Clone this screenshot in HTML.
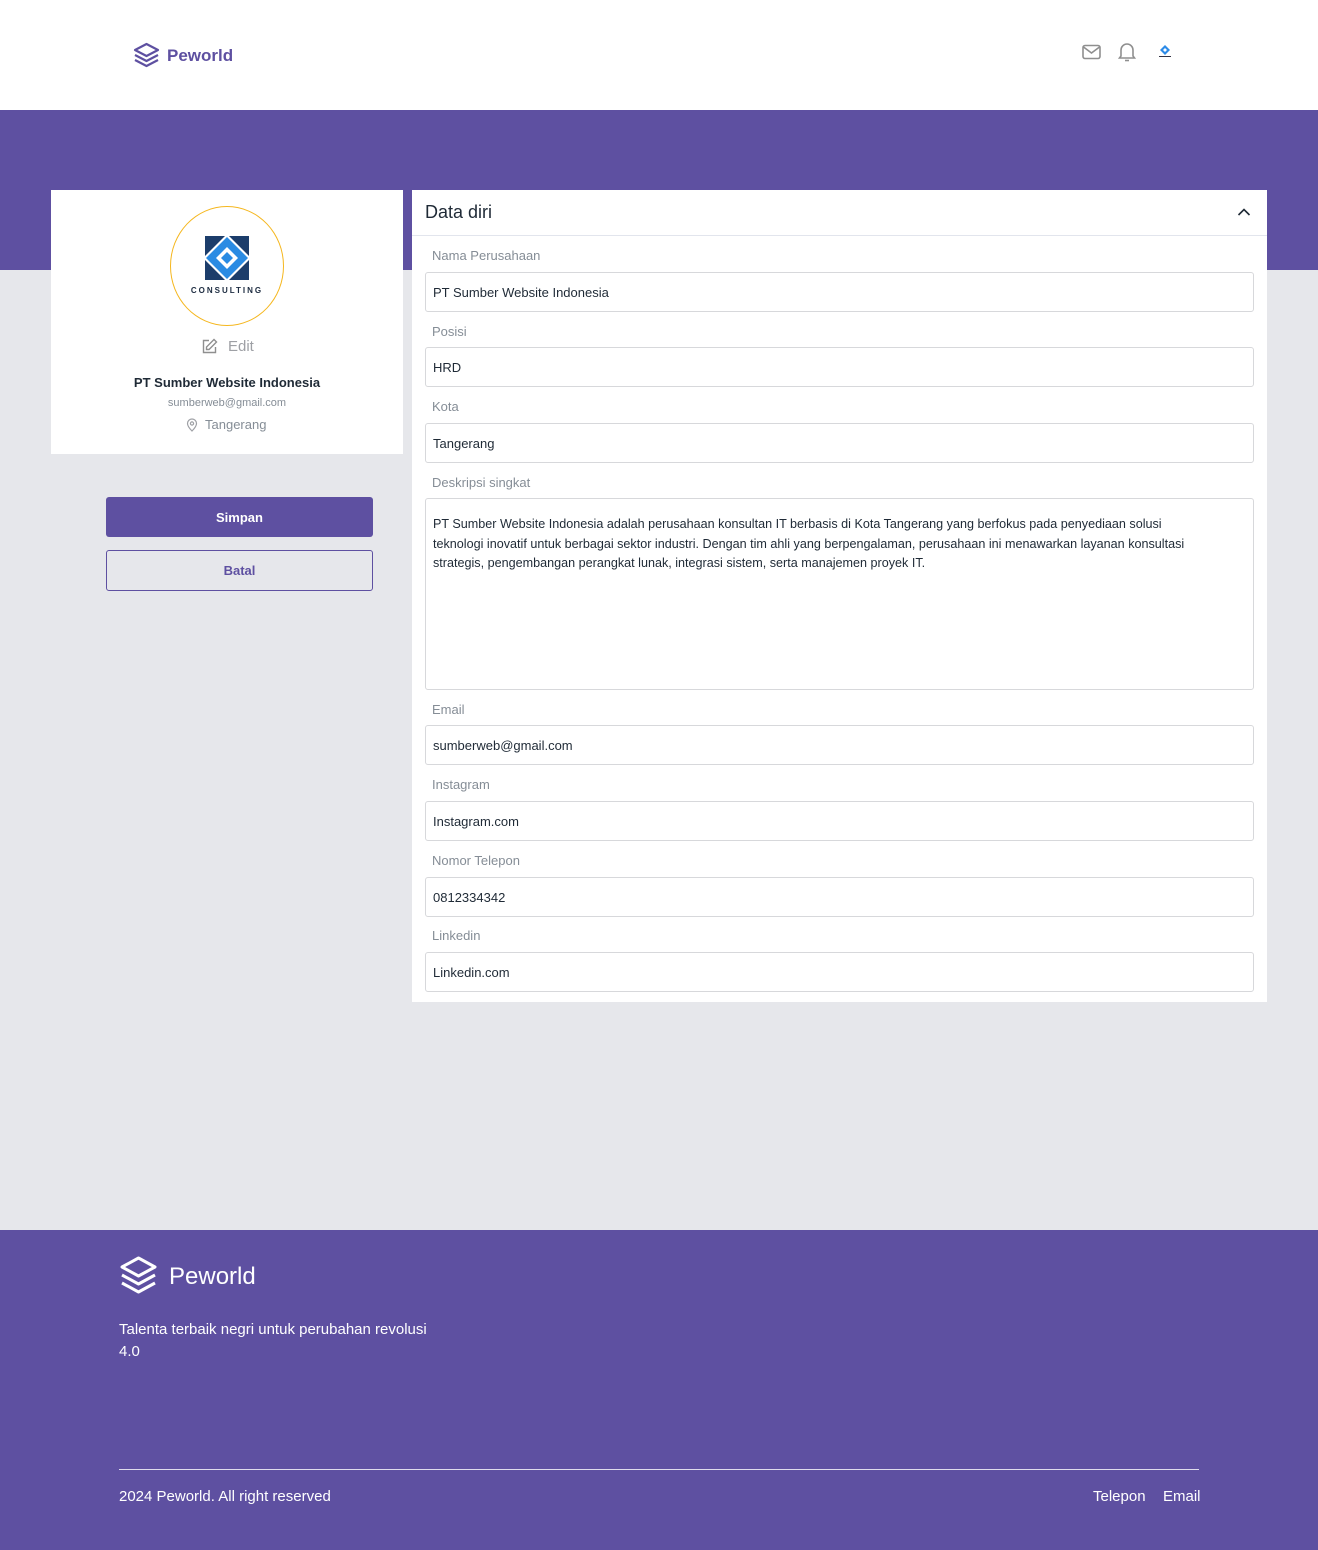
<!DOCTYPE html>
<html><head><meta charset="utf-8"><style>
*{box-sizing:border-box;margin:0;padding:0}
body{width:1318px;height:1550px;position:relative;font-family:"Liberation Sans",sans-serif;background:#E6E7EB;overflow:hidden}
.abs{position:absolute}
.hdr{left:0;top:0;width:1318px;height:110px;background:#fff}
.band{left:0;top:110px;width:1318px;height:160px;background:#5E50A1}
.card{background:#fff}
.lbl{left:432px;font-size:13px;color:#858D96;line-height:16px}
.inp{left:425px;width:829px;height:40px;border:1px solid #D7D8DB;border-radius:3px;font-size:13px;color:#1F2A36;padding:0 7px;line-height:40px}
.foot{left:0;top:1230px;width:1318px;height:320px;background:#5E50A1;color:#fff}
</style></head><body>
<div class="abs hdr"></div>
<svg class="abs" style="left:133px;top:42px" width="27" height="26" viewBox="0 0 27 26" fill="none" stroke="#5E50A1" stroke-width="2.2" stroke-linejoin="round"><path d="M13.5 2L25 8 13.5 14 2 8z"/><path d="M2 13l11.5 6L25 13"/><path d="M2 18l11.5 6L25 18"/></svg>
<div class="abs" style="left:167px;top:46px;font-size:17px;font-weight:bold;color:#5E50A1">Peworld</div>
<svg class="abs" style="left:1082px;top:44px" width="19" height="16" viewBox="0 0 19 16" fill="none" stroke="#8F8F8F" stroke-width="1.6"><rect x="1" y="1.5" width="17" height="13" rx="2"/><path d="M1.5 3l8 6 8-6"/></svg>
<svg class="abs" style="left:1118px;top:42px" width="18" height="20" viewBox="0 0 18 20" fill="none" stroke="#8F8F8F" stroke-width="1.6"><path d="M3 14V8a6 6 0 0112 0v6l1.5 2h-15z"/><path d="M7 18.5h4"/></svg>
<svg class="abs" style="left:1158px;top:44px" width="14" height="14" viewBox="0 0 14 14"><path d="M7 1L12 6 7 11 2 6z" fill="#2D8BE8"/><path d="M7 4L9 6 7 8 5 6z" fill="#fff"/><rect x="1" y="12" width="12" height="1" fill="#334"/></svg>
<div class="abs band"></div>

<div class="abs card" style="left:51px;top:190px;width:352px;height:264px"></div>
<div class="abs" style="left:170px;top:206px;width:114px;height:120px;border:1px solid #F5B71F;border-radius:50%;background:#fff"></div>
<svg class="abs" style="left:203px;top:234px" width="48" height="48" viewBox="0 0 48 48"><rect x="2" y="2" width="44" height="44" fill="#1C3D6B"/><path d="M24 0L48 24 24 48 0 24z" fill="#fff"/><path d="M24 3L45 24 24 45 3 24z" fill="#2A8BE3"/><path d="M24 13L35 24 24 35 13 24z" fill="#fff"/><path d="M24 18L30 24 24 30 18 24z" fill="#2A8BE3"/></svg>
<div class="abs" style="left:170px;top:286px;width:114px;text-align:center;font-size:8px;letter-spacing:2px;font-weight:bold;color:#1C2B40">CONSULTING</div>
<svg class="abs" style="left:201px;top:338px" width="17" height="17" viewBox="0 0 17 17" fill="none" stroke="#8F8F8F" stroke-width="1.4"><path d="M8 2.5H2.5v12h12V9"/><path d="M13 1.5l2.5 2.5L8 11.5H5.5V9z"/></svg>
<div class="abs" style="left:228px;top:338px;font-size:15px;color:#9EA0A5">Edit</div>
<div class="abs" style="left:51px;top:375px;width:352px;text-align:center;font-size:13px;font-weight:bold;color:#1F2A36">PT Sumber Website Indonesia</div>
<div class="abs" style="left:51px;top:397px;width:352px;text-align:center;font-size:11px;color:#858D96">sumberweb@gmail.com</div>
<svg class="abs" style="left:186px;top:418px" width="12" height="14" viewBox="0 0 12 14" fill="none" stroke="#9EA0A5" stroke-width="1.2"><path d="M6 13S1.5 8.5 1.5 5.5a4.5 4.5 0 019 0C10.5 8.5 6 13 6 13z"/><circle cx="6" cy="5.5" r="1.6"/></svg>
<div class="abs" style="left:205px;top:417px;font-size:13px;color:#858D96">Tangerang</div>

<div class="abs" style="left:106px;top:497px;width:267px;height:40px;background:#5E50A1;border-radius:3px;color:#fff;font-size:13px;font-weight:bold;text-align:center;line-height:41px">Simpan</div>
<div class="abs" style="left:106px;top:550px;width:267px;height:41px;border:1px solid #5E50A1;border-radius:3px;color:#5E50A1;font-size:13px;font-weight:bold;text-align:center;line-height:39px">Batal</div>

<div class="abs card" style="left:412px;top:190px;width:855px;height:812px"></div>
<div class="abs" style="left:412px;top:235px;width:855px;height:1px;background:#E2E5ED"></div>
<div class="abs" style="left:425px;top:202px;font-size:18px;color:#1F2A36">Data diri</div>
<svg class="abs" style="left:1237px;top:207px" width="14" height="10" viewBox="0 0 14 10" fill="none" stroke="#1F2A36" stroke-width="1.6"><path d="M1.5 8L7 2.5 12.5 8"/></svg>

<div class="abs lbl" style="top:248px">Nama Perusahaan</div>
<div class="abs inp" style="top:272px">PT Sumber Website Indonesia</div>
<div class="abs lbl" style="top:324px">Posisi</div>
<div class="abs inp" style="top:347px">HRD</div>
<div class="abs lbl" style="top:399px">Kota</div>
<div class="abs inp" style="top:423px">Tangerang</div>
<div class="abs lbl" style="top:475px">Deskripsi singkat</div>
<div class="abs inp" style="top:498px;height:192px;line-height:19.5px;padding-top:16px;font-size:12.6px;white-space:nowrap">PT Sumber Website Indonesia adalah perusahaan konsultan IT berbasis di Kota Tangerang yang berfokus pada penyediaan solusi<br>teknologi inovatif untuk berbagai sektor industri. Dengan tim ahli yang berpengalaman, perusahaan ini menawarkan layanan konsultasi<br>strategis, pengembangan perangkat lunak, integrasi sistem, serta manajemen proyek IT.</div>
<div class="abs lbl" style="top:702px">Email</div>
<div class="abs inp" style="top:725px">sumberweb@gmail.com</div>
<div class="abs lbl" style="top:777px">Instagram</div>
<div class="abs inp" style="top:801px">Instagram.com</div>
<div class="abs lbl" style="top:853px">Nomor Telepon</div>
<div class="abs inp" style="top:877px">0812334342</div>
<div class="abs lbl" style="top:928px">Linkedin</div>
<div class="abs inp" style="top:952px">Linkedin.com</div>

<div class="abs foot"></div>
<svg class="abs" style="left:119px;top:1256px" width="39" height="38" viewBox="0 0 39 38" fill="none" stroke="#fff" stroke-width="3" stroke-linejoin="round"><path d="M19.5 2L36 11 19.5 20 3 11z"/><path d="M3 19l16.5 9L36 19"/><path d="M3 27l16.5 9L36 27"/></svg>
<div class="abs" style="left:169px;top:1263px;font-size:24px;color:#fff">Peworld</div>
<div class="abs" style="left:119px;top:1319px;width:330px;font-size:15px;line-height:22px;color:#fff">Talenta terbaik negri untuk perubahan revolusi 4.0</div>
<div class="abs" style="left:119px;top:1469px;width:1080px;height:1px;background:#fff;opacity:.8"></div>
<div class="abs" style="left:119px;top:1488px;font-size:15px;color:#fff">2024 Peworld. All right reserved</div>
<div class="abs" style="left:1093px;top:1488px;font-size:15px;color:#fff">Telepon</div>
<div class="abs" style="left:1163px;top:1488px;font-size:15px;color:#fff">Email</div>
</body></html>
